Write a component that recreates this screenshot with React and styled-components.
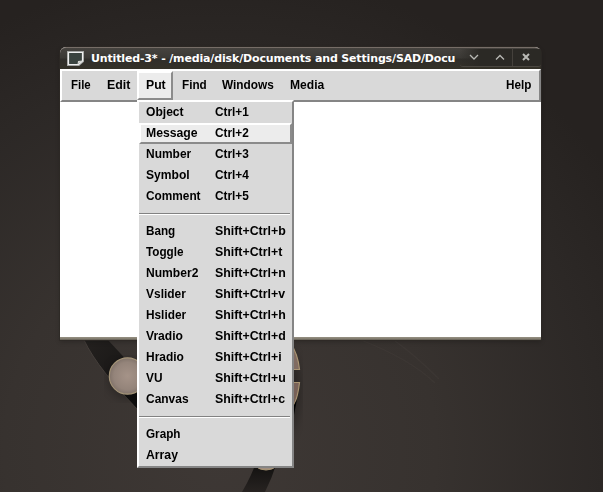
import React from "react";
import styled, { createGlobalStyle } from "styled-components";

const GlobalStyle = createGlobalStyle`
  * { box-sizing: border-box; }
  body { margin: 0; overflow: hidden; background: #2c2927; }
`;

const Desktop = styled.main`
  position: relative;
  width: 603px;
  height: 492px;
  overflow: hidden;
  font: bold 13px/21px "Liberation Sans", Arial, sans-serif;
  color: #000;
`;

const Wallpaper = styled.svg`
  display: block;
  width: 603px;
  height: 492px;
`;

const Window = styled.section`
  position: absolute;
  left: 60px;
  top: 47px;
  width: 481px;
  height: 293px;
  display: flex;
  flex-direction: column;
  background: #fff;
  border-radius: 6px 6px 0 0;
  box-shadow: 0 0 0 1px rgba(45, 42, 38, 0.75), 0 2px 5px rgba(0, 0, 0, 0.22);
`;

const TitleBar = styled.header`
  height: 22px;
  flex: none;
  display: flex;
  align-items: center;
  padding-left: 7px;
  border-top: 1px solid #766d67;
  border-radius: 6px 6px 0 0;
  background: linear-gradient(#46433f, #3b3935 45%, #302e2a 55%, #343128);
`;

const WindowIcon = styled.svg`
  width: 17px;
  height: 15px;
  flex: none;
`;

const Title = styled.h1`
  flex: 1;
  min-width: 0;
  margin: 0 0 0 7px;
  font: bold 11px/20px "DejaVu Sans", sans-serif;
  letter-spacing: -0.15px;
  white-space: nowrap;
  color: #fff;
`;

const Controls = styled.div`
  height: 18px;
  width: 81px;
  flex: none;
  display: grid;
  grid-template-columns: 27px 25px 29px;
  border-bottom: 1px solid #4b4741;
  background: linear-gradient(90deg, transparent, #2b2925 20px);
  border-radius: 0 0 3px 3px;
  margin-bottom: 2px;
`;

const Control = styled.button`
  display: flex;
  align-items: center;
  justify-content: center;
  padding: ${(p) => (p.$divided ? "0 2px 0 0" : "0")};
  border: 0;
  border-left: 1px solid ${(p) => (p.$divided ? "#45413c" : "transparent")};
  background: none;
`;

const MenuBar = styled.nav`
  height: 33px;
  flex: none;
  display: flex;
  border: 2px solid;
  border-color: #fff #858585 #858585 #fff;
  background: #d9d9d9;
`;

const MenuButton = styled.button`
  width: ${(p) => p.$width}px;
  height: 29px;
  margin-left: ${(p) => (p.$last ? "auto" : 0)};
  padding: 0 0 3px 7px;
  border: 2px solid;
  border-color: ${(p) => (p.$open ? "#fff #8b8b8b #8b8b8b #fff" : "transparent")};
  background: ${(p) => (p.$open ? "#ececec" : "transparent")};
  font: inherit;
  text-align: left;
  color: #000;
  white-space: nowrap;
`;

const Canvas = styled.div`
  flex: 1;
  background: #fff;
`;

const WindowEdge = styled.div`
  height: 3px;
  background: linear-gradient(#969082, #817b6f 66%, #5c574e);
`;

const Menu = styled.div`
  position: absolute;
  left: 137px;
  top: 100px;
  width: 157px;
  height: 368px;
  border: 2px solid;
  border-color: #fff #858585 #858585 #fff;
  background: #d9d9d9;
`;

const MenuItem = styled.div`
  height: 21px;
  display: grid;
  grid-template-columns: 69px 1fr;
  padding-left: 4.6px;
  border: 2px solid;
  border-color: ${(p) => (p.$active ? "#fff #8b8b8b #8b8b8b #fff" : "transparent")};
  background: ${(p) => (p.$active ? "#ececec" : "transparent")};
  line-height: 16px;
`;

/* Condenses the face horizontally to the narrow X11 menu lettering. */
const Lettering = styled.span`
  display: inline-block;
  justify-self: start;
  white-space: nowrap;
  transform: scaleX(${(p) => p.$fit || 0.92});
  transform-origin: left;
`;

const Separator = styled.hr`
  height: 2px;
  margin: 6px 2px 6px 0;
  border: 0;
  border-top: 1px solid #828282;
  border-bottom: 1px solid #fff;
`;

const topMenus = [
  { label: "File", width: 36, fit: 0.88 },
  { label: "Edit", width: 39, fit: 0.95 },
  { label: "Put", width: 36, open: true, fit: 0.94 },
  { label: "Find", width: 40, fit: 0.9 },
  { label: "Windows", width: 68, fit: 0.91 },
  { label: "Media", width: 55, fit: 0.93 },
];

const groups = [
  [
    ["Object", "Ctrl+1", 0.93],
    ["Message", "Ctrl+2", 0.94],
    ["Number", "Ctrl+3"],
    ["Symbol", "Ctrl+4", 0.93],
    ["Comment", "Ctrl+5", 0.91],
  ],
  [
    ["Bang", "Shift+Ctrl+b", 0.9],
    ["Toggle", "Shift+Ctrl+t", 0.9],
    ["Number2", "Shift+Ctrl+n", 0.93],
    ["Vslider", "Shift+Ctrl+v"],
    ["Hslider", "Shift+Ctrl+h", 0.91],
    ["Vradio", "Shift+Ctrl+d", 0.93],
    ["Hradio", "Shift+Ctrl+i"],
    ["VU", "Shift+Ctrl+u", 0.91],
    ["Canvas", "Shift+Ctrl+c", 0.92],
  ],
  [["Graph", null, 0.9], ["Array", null, 0.94]],
];

function Background() {
  return (
    <Wallpaper viewBox="0 0 603 492">
      <defs>
        <radialGradient id="glow" gradientUnits="userSpaceOnUse" cx="220" cy="450" r="480">
          <stop offset="0" stopColor="#3e3835" />
          <stop offset="0.45" stopColor="#37322f" />
          <stop offset="0.8" stopColor="#2c2826" />
          <stop offset="1" stopColor="#262220" />
        </radialGradient>
        <radialGradient id="disc">
          <stop offset="0" stopColor="#a59388" />
          <stop offset="0.75" stopColor="#94847a" />
          <stop offset="1" stopColor="#81736a" />
        </radialGradient>
        <linearGradient id="arm" x2="1" y2="1">
          <stop stopColor="#24211f" />
          <stop offset="0.45" stopColor="#1b1918" />
          <stop offset="1" stopColor="#090909" />
        </linearGradient>
        <linearGradient id="stem" x2="0" y2="1">
          <stop stopColor="#100f0e" />
          <stop offset="1" stopColor="#272321" />
        </linearGradient>
        <filter id="soft"><feGaussianBlur stdDeviation="5" /></filter>
      </defs>
      <rect width="603" height="492" fill="url(#glow)" />
      <path d="M84 340Q98 370 145 417V380L108 340Z" fill="url(#arm)" />
      <path d="M84 340Q98 370 145 417" fill="none" stroke="#443e3a" strokeWidth="1" />
      <circle cx="128" cy="379" r="20" fill="#000" opacity="0.25" filter="url(#soft)" />
      <circle cx="127.5" cy="376" r="18.2" fill="url(#disc)" stroke="#a49478" strokeWidth="1.2" />
      <path d="M265 492H242Q252 475 256 462H277Q272 478 265 492Z" fill="url(#stem)" />
      <ellipse cx="266" cy="457" rx="15" ry="13" fill="#a18e7f" stroke="#a99674" />
      <path d="M285 340Q307 365 298 415L289 440Z" fill="#000" opacity="0.3" filter="url(#soft)" />
      <path d="M290 405H294Q298 396 299.5 382.5H290Z" fill="#786158" stroke="#a99471" strokeWidth="1.2" />
      <path d="M294 405L297 399L294 415Z" fill="#000" />
      <path d="M290 342Q298 354 299.5 369.5H290Z" fill="#806b61" stroke="#a99471" strokeWidth="1.2" />
      <path d="M361 340Q410 359 435 383M395 341Q415 355 439 379" stroke="#494340" strokeWidth="1.2" opacity="0.3" fill="none" />
    </Wallpaper>
  );
}

export default function App() {
  return (
    <Desktop>
      <GlobalStyle />
      <Background />
      <Window>
        <TitleBar>
          <WindowIcon viewBox="0 0 17 15">
            <path d="M1.5 1.5H15.5V10L11.5 13.5H1.5Z" fill="#343d38" stroke="#a3a5a2" strokeWidth="3" />
            <path d="M1.5 1.5H15.5V10L11.5 13.5H1.5Z" fill="#3a433f" stroke="#eee" strokeWidth="1.2" />
            <path d="M10.5 13.5L11 10L15.5 9.5Z" fill="#d5d6d2" />
          </WindowIcon>
          <Title>Untitled-3* - /media/disk/Documents and Settings/SAD/Docu</Title>
          <Controls>
            <Control aria-label="Minimize">
              <svg width="10" height="7" viewBox="0 0 10 7"><path d="M1 1L5 5L9 1" fill="none" stroke="#b9b9b5" strokeWidth="1.3" /></svg>
            </Control>
            <Control aria-label="Maximize">
              <svg width="10" height="7" viewBox="0 0 10 7"><path d="M1 5.5L5 1.5L9 5.5" fill="none" stroke="#b9b9b5" strokeWidth="1.3" /></svg>
            </Control>
            <Control aria-label="Close" $divided>
              <svg width="8" height="8" viewBox="0 0 8 8"><path d="M1 1L7 7M7 1L1 7" fill="none" stroke="#b9b9b5" strokeWidth="2" /></svg>
            </Control>
          </Controls>
        </TitleBar>
        <MenuBar>
          {topMenus.map((m) => (
            <MenuButton key={m.label} $width={m.width} $open={m.open}>
              <Lettering $fit={m.fit}>{m.label}</Lettering>
            </MenuButton>
          ))}
          <MenuButton $width={42} $last>
            <Lettering $fit={0.9}>Help</Lettering>
          </MenuButton>
        </MenuBar>
        <Canvas />
        <WindowEdge />
      </Window>
      <Menu>
        {groups.map((items, i) => (
          <React.Fragment key={i}>
            {i > 0 && <Separator />}
            {items.map(([label, keys, fit]) => (
              <MenuItem key={label} $active={label === "Message"}>
                <Lettering $fit={fit}>{label}</Lettering>
                {keys && <Lettering $fit={keys.startsWith("Shift") ? 0.95 : 0.91}>{keys}</Lettering>}
              </MenuItem>
            ))}
          </React.Fragment>
        ))}
      </Menu>
    </Desktop>
  );
}
